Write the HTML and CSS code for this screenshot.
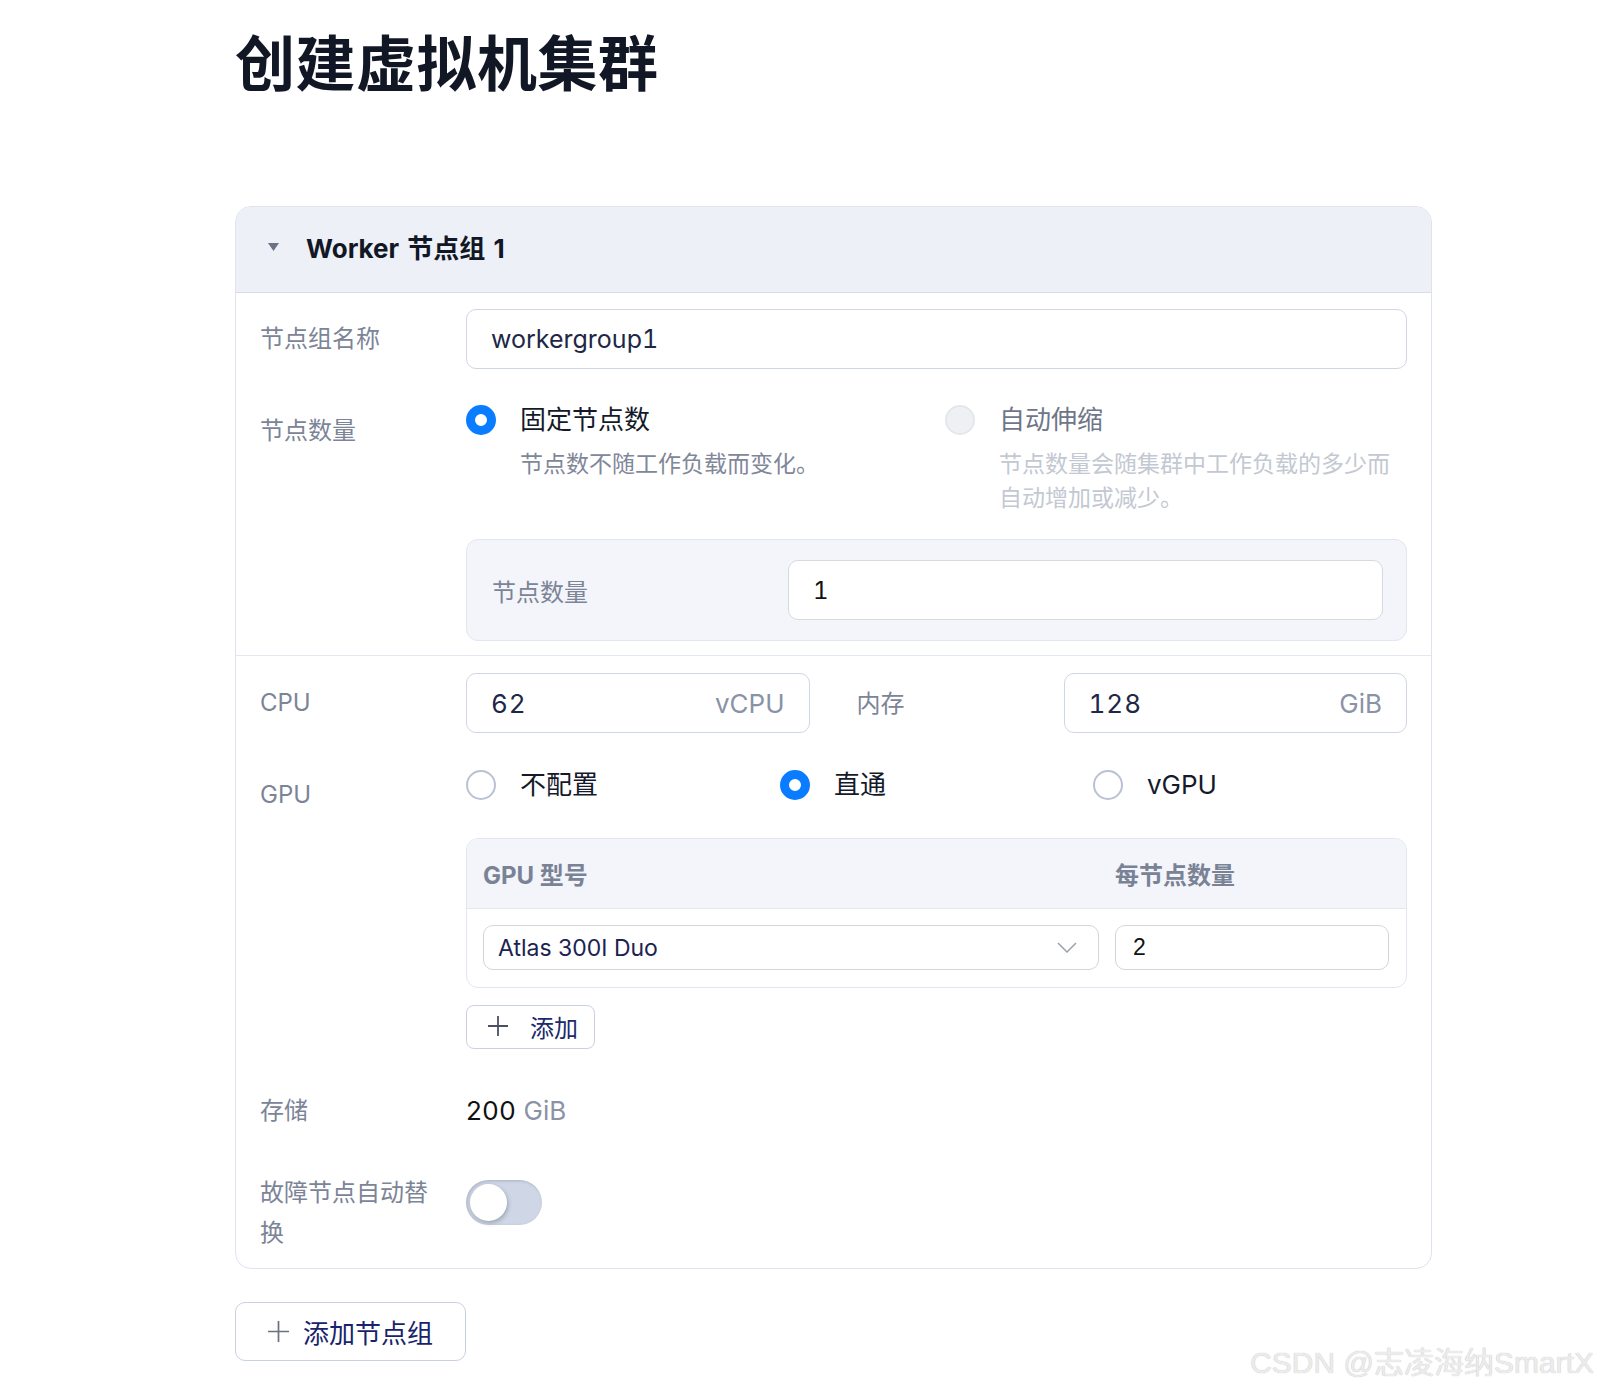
FILE: index.html
```html
<!DOCTYPE html>
<html lang="zh-CN">
<head>
<meta charset="utf-8">
<title>创建虚拟机集群</title>
<link rel="stylesheet" href="styles.css">
</head>
<body>
<div class="page">
  <h1 class="title">创建虚拟机集群</h1>

  <section class="card">
    <div class="card-header">
      <svg class="caret" viewBox="0 0 11 8"><path d="M0 0H11L5.5 8Z"/></svg>
      <span class="card-title">Worker 节点组 1</span>
    </div>

    <div class="section">
      <div class="row">
        <div class="label">节点组名称</div>
        <div class="field">
          <div class="input name">workergroup1</div>
        </div>
      </div>

      <div class="row">
        <div class="label">节点数量</div>
        <div class="field">
          <div class="options two">
            <div class="option">
              <span class="radio checked"></span>
              <div class="option-body">
                <div class="option-title">固定节点数</div>
                <div class="option-desc">节点数不随工作负载而变化。</div>
              </div>
            </div>
            <div class="option disabled">
              <span class="radio"></span>
              <div class="option-body">
                <div class="option-title">自动伸缩</div>
                <div class="option-desc">节点数量会随集群中工作负载的多少而自动增加或减少。</div>
              </div>
            </div>
          </div>
          <div class="subpanel">
            <div class="sub-label">节点数量</div>
            <div class="input plain">1</div>
          </div>
        </div>
      </div>
    </div>

    <div class="section divided">
      <div class="row">
        <div class="label">CPU</div>
        <div class="field pair">
          <div class="input unit"><span class="value">62</span><span class="unit-text">vCPU</span></div>
          <div class="pair-label">内存</div>
          <div class="input unit"><span class="value">128</span><span class="unit-text">GiB</span></div>
        </div>
      </div>

      <div class="row">
        <div class="label">GPU</div>
        <div class="field">
          <div class="options three">
            <div class="option"><span class="radio"></span><div class="option-title">不配置</div></div>
            <div class="option"><span class="radio checked"></span><div class="option-title">直通</div></div>
            <div class="option"><span class="radio"></span><div class="option-title">vGPU</div></div>
          </div>
          <div class="gpu-table">
            <div class="gpu-grid gpu-head">
              <div>GPU 型号</div>
              <div>每节点数量</div>
            </div>
            <div class="gpu-grid gpu-body">
              <div class="select">
                <span>Atlas 300I Duo</span>
                <svg class="chevron" viewBox="0 0 20 11"><path d="M1 1L10 10L19 1"/></svg>
              </div>
              <div class="small-input">2</div>
            </div>
          </div>
          <button class="add-btn" type="button">
            <svg class="plus" viewBox="0 0 20 20"><path d="M10 0V20M0 10H20"/></svg>
            <span>添加</span>
          </button>
        </div>
      </div>

      <div class="row">
        <div class="label">存储</div>
        <div class="field storage"><span class="storage-num">200</span> <span class="storage-unit">GiB</span></div>
      </div>

      <div class="row">
        <div class="label multi">故障节点自动替换</div>
        <div class="field">
          <div class="toggle"><span class="knob"></span></div>
        </div>
      </div>
    </div>
  </section>

  <button class="add-group" type="button">
    <svg class="plus big" viewBox="0 0 22 22"><path d="M11 0V22M0 11H22"/></svg>
    <span>添加节点组</span>
  </button>
</div>
<div class="watermark">CSDN @志凌海纳SmartX</div>
</body>
</html>
```

FILE: styles.css
```css
html, body {
  margin: 0;
  padding: 0;
  background: #ffffff;
}

body {
  font-family: Inter, "Noto Sans CJK SC", "Noto Sans", sans-serif;
  color: #141a2a;
  position: relative;
  min-height: 1391px;
  overflow: hidden;
}

.page {
  padding: 20px 0 0 235px;
  width: 1197px;
}

.title {
  margin: 0;
  font-family: "Noto Sans CJK SC", sans-serif;
  font-size: 60px;
  line-height: 80px;
  font-weight: 700;
  color: #111725;
  letter-spacing: 0.5px;
}

.card {
  margin-top: 106px;
  border: 1px solid #dfe3ee;
  border-radius: 16px;
  overflow: hidden;
  background: #fff;
}

.card-header {
  height: 86px;
  box-sizing: border-box;
  padding-bottom: 6px;
  background: #edf0f7;
  border-bottom: 1px solid #d9dce3;
  display: flex;
  align-items: center;
  padding-left: 32px;
}

.caret {
  width: 11px;
  height: 8px;
  fill: #6b7385;
  margin-right: 27px;
}

.card-title {
  font-size: 26px;
  font-weight: 700;
  color: #111725;
  word-spacing: 2px;
}

.section {
  padding: 16px 24px 14px 24px;
}

.section.divided {
  border-top: 1px solid #e3e7f0;
  padding-top: 17px;
  padding-bottom: 15px;
}

.row {
  display: grid;
  grid-template-columns: 206px 1fr;
}

.row + .row {
  margin-top: 32px;
}

.label {
  font-size: 24px;
  line-height: 60px;
  color: #7c8497;
  padding-right: 26px;
}

.label.multi {
  line-height: 40px;
}

.input {
  height: 60px;
  box-sizing: border-box;
  border: 1.5px solid #cfd6e4;
  border-radius: 10px;
  padding: 0 24px;
  display: flex;
  align-items: center;
  font-size: 24px;
  color: #1e2748;
  background: #fff;
  font-variant-numeric: tabular-nums;
}

.input.name {
  font-size: 25px;
}

.input.plain {
  border-color: #d7d9de;
  color: #111;
}

/* radio options */
.options {
  display: grid;
  padding-top: 4px;
}

.options.two {
  grid-template-columns: 479px 1fr;
}

.options.three {
  grid-template-columns: 314px 313px 1fr;
  padding-top: 5px;
}

.option {
  display: flex;
  align-items: flex-start;
  gap: 24px;
}

.radio {
  width: 30px;
  height: 30px;
  box-sizing: border-box;
  border-radius: 50%;
  border: 2px solid #b9c2d4;
  background: #fff;
  flex: none;
}

.radio.checked {
  border: 9px solid #0a7cff;
}

.option.disabled .radio {
  background: #eef0f4;
  border-color: #e4e7ec;
}

.option-title {
  font-size: 26px;
  line-height: 30px;
  color: #141a2a;
}

.option.disabled .option-title {
  color: #6e7689;
}

.option-desc {
  margin-top: 12px;
  font-size: 23px;
  line-height: 34px;
  color: #7f8799;
}

.option.disabled .option-desc {
  color: #c3c8d2;
}

/* sub panel */
.subpanel {
  margin-top: 24px;
  background: #f3f5fa;
  border: 1px solid #e1e6f0;
  border-radius: 12px;
  padding: 20px 23px 20px 25px;
  display: grid;
  grid-template-columns: 296px 1fr;
  align-items: center;
}

.sub-label {
  font-size: 24px;
  color: #7c8497;
}

/* cpu / memory pair */
.pair {
  display: grid;
  grid-template-columns: 1fr 254px 1fr;
  align-items: center;
}

.pair-label {
  font-size: 24px;
  color: #7c8497;
  padding-left: 47px;
  padding-bottom: 4px;
}

.input.unit {
  justify-content: space-between;
  font-size: 26px;
}

.value {
  color: #1e2748;
  letter-spacing: 1px;
}

.unit-text {
  color: #8a92a6;
}

/* gpu table */
.gpu-table {
  margin-top: 38px;
  border: 1px solid #e1e6f0;
  border-radius: 12px;
  overflow: hidden;
}

.gpu-grid {
  display: grid;
  grid-template-columns: 1fr 274px;
  column-gap: 16px;
  padding-left: 16px;
  padding-right: 17px;
}

.gpu-head {
  height: 69px;
  align-items: center;
  background: #f3f5fa;
  border-bottom: 1px solid #e3e7ef;
  font-size: 24px;
  font-weight: 700;
  color: #7a8296;
}

.gpu-body {
  padding-top: 16px;
  padding-bottom: 17px;
}

.select {
  height: 45px;
  box-sizing: border-box;
  border: 1.5px solid #d3d5da;
  border-radius: 10px;
  padding: 0 21px 0 14px;
  display: flex;
  align-items: center;
  justify-content: space-between;
  font-size: 23px;
  color: #1b2350;
}

.chevron {
  width: 20px;
  height: 11px;
  fill: none;
  stroke: #9ca2ad;
  stroke-width: 1.5;
}

.small-input {
  height: 45px;
  box-sizing: border-box;
  border: 1.5px solid #d3d5da;
  border-radius: 10px;
  padding: 0 17px;
  display: flex;
  align-items: center;
  font-size: 23px;
  color: #111;
  font-family: "Liberation Sans", Arial, sans-serif;
}

/* buttons */
.add-btn {
  margin-top: 17px;
  height: 44px;
  width: 129px;
  box-sizing: border-box;
  border: 1.5px solid #c9d1e3;
  border-radius: 8px;
  background: #fff;
  display: flex;
  align-items: center;
  gap: 22px;
  padding: 0 0 2px 21px;
  font-family: Inter, "Noto Sans CJK SC", sans-serif;
  font-size: 24px;
  color: #1b2a6b;
}

.plus {
  width: 20px;
  height: 20px;
  fill: none;
  stroke: #4b5160;
  stroke-width: 1.8;
  flex: none;
}

.plus.big {
  width: 21px;
  height: 21px;
  stroke: #6b7180;
}

/* storage */
.storage {
  font-size: 26px;
  line-height: 60px;
}

.storage-num {
  color: #111;
  letter-spacing: 0.5px;
}

.storage-unit {
  color: #8a92a6;
}

/* toggle */
.toggle {
  margin-top: 7px;
  width: 76px;
  height: 45px;
  border-radius: 23px;
  background: #cfd7e6;
  box-shadow: inset 1px 1px 3px rgba(60, 70, 90, 0.25);
  position: relative;
}

.knob {
  position: absolute;
  left: 4px;
  top: 4px;
  width: 37px;
  height: 37px;
  border-radius: 50%;
  background: #fff;
  box-shadow: 1px 2px 4px rgba(40, 50, 70, 0.3);
}

.add-group {
  margin-top: 33px;
  width: 231px;
  height: 59px;
  box-sizing: border-box;
  border: 1.5px solid #c8d0e2;
  border-radius: 10px;
  background: #fff;
  display: flex;
  align-items: center;
  gap: 14px;
  padding: 0 0 0 32px;
  font-family: Inter, "Noto Sans CJK SC", sans-serif;
  font-size: 26px;
  color: #17236b;
}

.watermark {
  position: absolute;
  right: 6px;
  top: 1338px;
  font-family: "Liberation Sans", "Noto Sans CJK SC", sans-serif;
  font-size: 30px;
  color: #ececec;
  text-shadow: 0 0 1px #b4b4b4;
  white-space: nowrap;
}
```
